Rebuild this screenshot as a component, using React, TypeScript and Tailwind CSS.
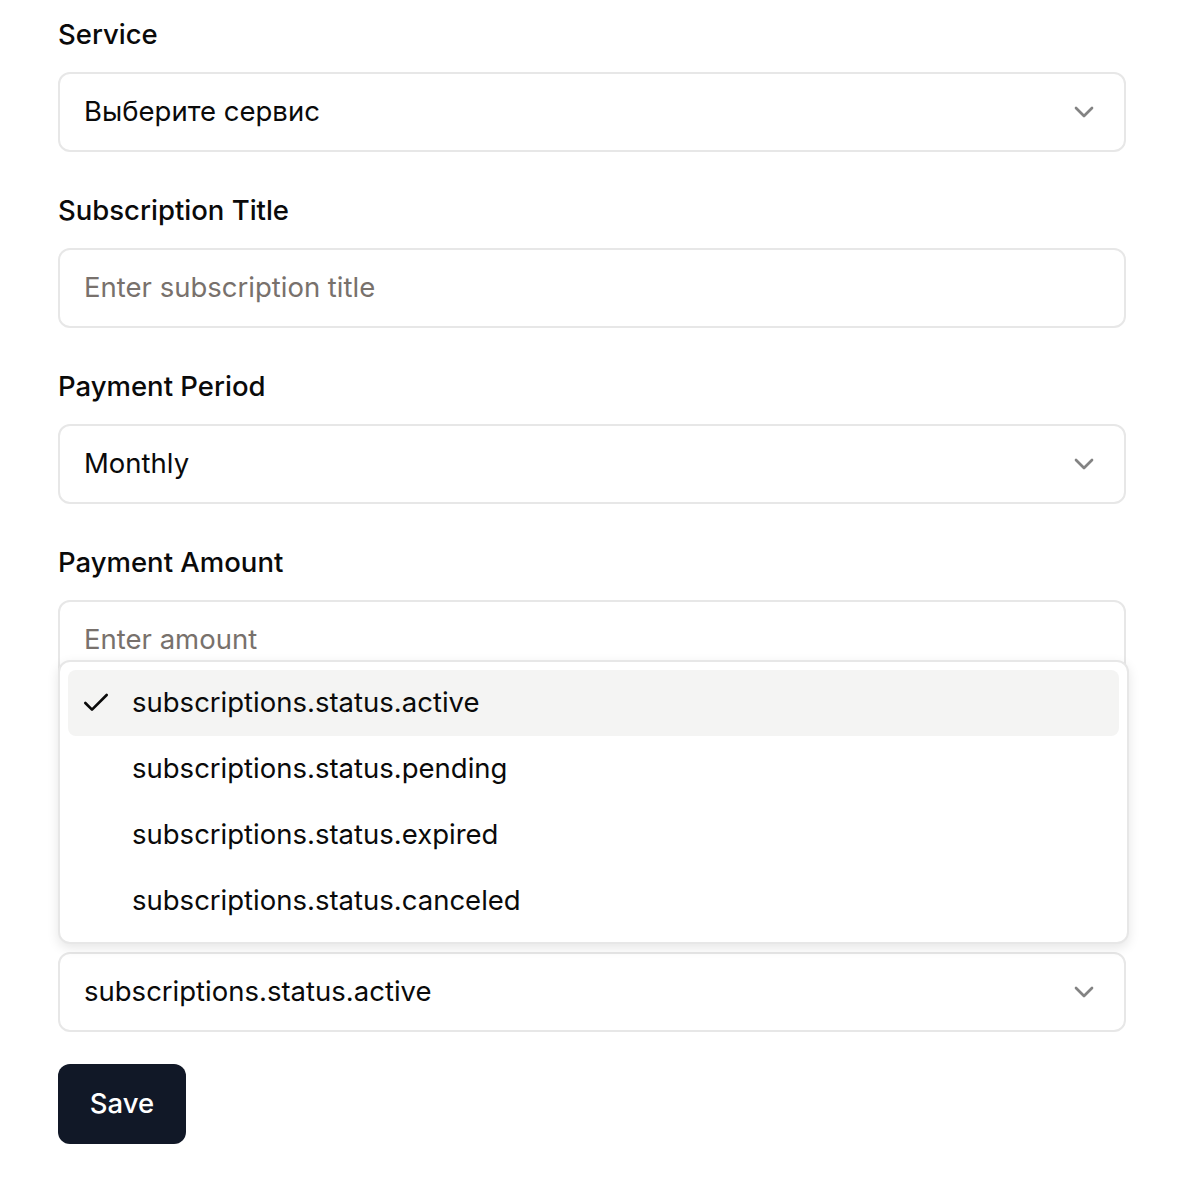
import React from "react";
import { ChevronDown, Check } from "lucide-react";

function Label({ children }: { children: React.ReactNode }) {
  return <div className="text-[27.5px] leading-[28px] font-medium text-[#0a0a0a]">{children}</div>;
}

function SelectBox({ value }: { value: string }) {
  return (
    <div className="h-[80px] w-full rounded-[12px] border-2 border-[#e7e7e7] bg-white px-[24px] flex items-center justify-between">
      <span className="text-[27.5px] text-[#0a0a0a]">{value}</span>
      <ChevronDown className="w-[32px] h-[32px] text-[#0a0a0a] opacity-50" strokeWidth={2} />
    </div>
  );
}

function InputBox({ placeholder }: { placeholder: string }) {
  return (
    <div className="h-[80px] w-full rounded-[12px] border-2 border-[#e7e7e7] bg-white px-[24px] flex items-center">
      <span className="text-[27.5px] text-[#78716c]">{placeholder}</span>
    </div>
  );
}

function Field({ label, children }: { label: string; children: React.ReactNode }) {
  return (
    <div className="flex flex-col gap-[24px]">
      <Label>{label}</Label>
      {children}
    </div>
  );
}

const items = [
  "subscriptions.status.active",
  "subscriptions.status.pending",
  "subscriptions.status.expired",
  "subscriptions.status.canceled",
];

export default function App() {
  return (
    <div className="relative min-h-[1200px] bg-white px-[58px] pt-[20px]" style={{ fontFamily: "Inter, 'Noto Sans', sans-serif" }}>
      <div className="flex flex-col gap-[44px]">
        <Field label="Service">
          <SelectBox value="Выберите сервис" />
        </Field>
        <Field label="Subscription Title">
          <InputBox placeholder="Enter subscription title" />
        </Field>
        <Field label="Payment Period">
          <SelectBox value="Monthly" />
        </Field>
        <Field label="Payment Amount">
          <InputBox placeholder="Enter amount" />
        </Field>
        <div className="invisible">
          <Field label="Start Date">
            <InputBox placeholder="Select date" />
          </Field>
        </div>
        <Field label="Status">
          <SelectBox value="subscriptions.status.active" />
        </Field>
      </div>
      <div className="mt-[32px]">
        <button className="h-[80px] w-[128px] rounded-[12px] bg-[#111827] text-white text-[27.5px] font-medium">Save</button>
      </div>

      <div className="absolute left-[58px] top-[660px] w-[1071px] rounded-[12px] border-2 border-[#e7e7e7] bg-white p-[8px] shadow-[0_4px_12px_rgba(0,0,0,0.10)] z-20">
        {items.map((it, i) => (
          <div
            key={it}
            className={`h-[66px] rounded-[8px] flex items-center ${i === 0 ? "bg-[#f4f4f3]" : ""}`}
          >
            <div className="w-[64px] flex items-center pl-[12px]">
              {i === 0 && <Check className="w-[32px] h-[32px] text-[#0a0a0a]" strokeWidth={2} />}
            </div>
            <span className="text-[27.5px] text-[#0a0a0a]">{it}</span>
          </div>
        ))}
      </div>
    </div>
  );
}
